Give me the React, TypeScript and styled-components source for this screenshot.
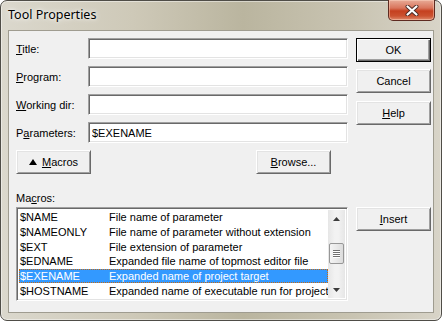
import { Fragment } from "react";
import styled, { createGlobalStyle } from "styled-components";

const GlobalStyle = createGlobalStyle`
  body {
    margin: 0;
    background: #ffffff;
  }
`;

const Window = styled.div`
  box-sizing: border-box;
  width: 442px;
  height: 321px;
  border: 1px solid #4f4d47;
  border-radius: 7px;
  padding: 0 7px 7px 7px;
  display: flex;
  flex-direction: column;
  background: linear-gradient(
    90deg,
    #dbd8cd 0%,
    #cec9b8 30%,
    #bab59f 55%,
    #c9c4b2 80%,
    #d8d4c8 100%
  );
  box-shadow: inset 0 0 0 1px rgba(255, 255, 255, 0.45);
`;

const TitleBar = styled.div`
  height: 29px;
  display: flex;
  align-items: flex-start;
  justify-content: space-between;
  margin-right: -1px;
`;

const Title = styled.div`
  font-family: "Noto Sans", "Open Sans", sans-serif;
  font-size: 12.5px;
  color: #000;
  line-height: 16px;
  padding-top: 6px;
  text-shadow: 0 0 6px rgba(255, 255, 255, 0.9), 0 0 3px rgba(255, 255, 255, 0.9);
`;

const CloseButton = styled.div`
  box-sizing: border-box;
  width: 47px;
  height: 21px;
  margin-top: -1px;
  border: 1px solid #5e2a20;
  border-top: none;
  border-radius: 0 0 5px 5px;
  display: flex;
  align-items: center;
  justify-content: center;
  background: linear-gradient(180deg, #e8ab97 0%, #d9755c 40%, #c5401f 55%, #cb5230 80%, #df8a6c 100%);
  box-shadow: inset 0 0 0 1px rgba(255, 220, 200, 0.45);
`;

const Client = styled.div`
  box-sizing: border-box;
  height: 283px;
  border: 1px solid #9f9c90;
  background: #f0f0f0;
  padding: 7px 0 0 7px;
  display: grid;
  grid-template-columns: 332px 75px;
  column-gap: 8px;
  align-items: start;
  font-family: "Liberation Sans", Arial, sans-serif;
  font-size: 11px;
  color: #000;
`;

const LeftCol = styled.div`
  display: flex;
  flex-direction: column;
`;

const RightCol = styled.div`
  display: flex;
  flex-direction: column;
`;

const Fields = styled.div`
  display: grid;
  grid-template-columns: 72px 260px;
  row-gap: 7px;
  align-items: center;
`;

const Label = styled.label`
  line-height: 14px;
`;

const Key = styled.span`
  text-decoration: underline;
  text-underline-offset: 1px;
`;

const TextBox = styled.input`
  box-sizing: border-box;
  width: 260px;
  height: 21px;
  margin: 0;
  padding: 0 3px;
  border: 1px solid;
  border-color: #a0a0a0 #ffffff #ffffff #a0a0a0;
  box-shadow: inset 1px 1px 0 #696969, inset -1px -1px 0 #e3e3e3;
  background: #fff;
  font-family: "Liberation Sans", Arial, sans-serif;
  font-size: 11px;
  color: #000;
  outline: none;
`;

const Button = styled.div<{ $default?: boolean; $gap?: number }>`
  box-sizing: border-box;
  width: 75px;
  height: 24px;
  margin-top: ${(p) => p.$gap ?? 0}px;
  display: flex;
  align-items: center;
  justify-content: center;
  gap: 5px;
  background: #f0f0f0;
  line-height: 14px;
  border: 1px solid;
  border-color: ${(p) =>
    p.$default ? "#000 #000 #000 #000" : "#ffffff #696969 #696969 #ffffff"};
  box-shadow: ${(p) =>
    p.$default
      ? "inset 1px 1px 0 #fff, inset -1px -1px 0 #696969, inset -2px -2px 0 #a0a0a0"
      : "inset 1px 1px 0 #e3e3e3, inset -1px -1px 0 #a0a0a0"};
`;

const Triangle = styled.span`
  width: 0;
  height: 0;
  border-left: 4px solid transparent;
  border-right: 4px solid transparent;
  border-bottom: 6px solid #000;
  margin-top: -1px;
`;

const ButtonRow = styled.div`
  margin-top: 7px;
  display: flex;
  justify-content: space-between;
  padding-right: 17px;
`;

const ListLabel = styled.div`
  margin-top: 17px;
  line-height: 14px;
`;

const ListBox = styled.div`
  box-sizing: border-box;
  margin-top: 2px;
  width: 332px;
  height: 94px;
  border: 1px solid;
  border-color: #a0a0a0 #ffffff #ffffff #a0a0a0;
  box-shadow: inset 1px 1px 0 #696969, inset -1px -1px 0 #e3e3e3;
  background: #fff;
  padding: 2px;
  display: flex;
`;

const Rows = styled.div`
  flex: 1;
  display: flex;
  flex-direction: column;
  overflow: hidden;
`;

const Row = styled.div<{ $selected?: boolean }>`
  box-sizing: border-box;
  height: 15px;
  display: grid;
  grid-template-columns: 89px 1fr;
  align-items: center;
  padding-left: 1px;
  white-space: nowrap;
  background: ${(p) => (p.$selected ? "#3399ff" : "transparent")};
  color: ${(p) => (p.$selected ? "#fff" : "#000")};
  outline: ${(p) => (p.$selected ? "1px dotted #c86a10" : "none")};
  outline-offset: -1px;
`;

const ScrollBar = styled.div`
  width: 17px;
  display: flex;
  flex-direction: column;
  background: linear-gradient(90deg, #e6e6e6, #f2f2f2 40%, #f2f2f2 60%, #e6e6e6);
`;

const ArrowBtn = styled.div`
  height: 17px;
  display: flex;
  align-items: center;
  justify-content: center;
`;

const Track = styled.div`
  flex: 1;
  position: relative;
`;

const Thumb = styled.div`
  position: absolute;
  left: 1px;
  right: 1px;
  height: 21px;
  box-sizing: border-box;
  border: 1px solid #979797;
  border-radius: 2px;
  background: linear-gradient(90deg, #f4f4f4, #e9e9e9 50%, #dcdcdc);
  display: flex;
  flex-direction: column;
  align-items: center;
  justify-content: center;
  gap: 1px;
`;

const Grip = styled.span`
  width: 7px;
  height: 1px;
  background: #6f6f6f;
  box-shadow: 0 1px 0 #fff;
`;

const macros = [
  ["$NAME", "File name of parameter"],
  ["$NAMEONLY", "File name of parameter without extension"],
  ["$EXT", "File extension of parameter"],
  ["$EDNAME", "Expanded file name of topmost editor file"],
  ["$EXENAME", "Expanded name of project target"],
  ["$HOSTNAME", "Expanded name of executable run for project"],
];

const fields: { key: string; rest: string; pre?: string; value: string }[] = [
  { key: "T", rest: "itle:", value: "" },
  { key: "P", rest: "rogram:", value: "" },
  { key: "W", rest: "orking dir:", value: "" },
  { pre: "P", key: "a", rest: "rameters:", value: "$EXENAME" },
];

function CloseGlyph() {
  return (
    <svg width="14" height="11" viewBox="0 0 14 11">
      <path d="M2.5 1.5 L11.5 9.5 M11.5 1.5 L2.5 9.5" stroke="#4a2a24" strokeWidth="4" strokeLinecap="round" />
      <path d="M2.5 1.5 L11.5 9.5 M11.5 1.5 L2.5 9.5" stroke="#ffffff" strokeWidth="2.2" strokeLinecap="round" />
    </svg>
  );
}

function Arrow({ up }: { up?: boolean }) {
  return (
    <svg width="7" height="4" viewBox="0 0 7 4">
      <path d={up ? "M0 4 L3.5 0 L7 4 Z" : "M0 0 L7 0 L3.5 4 Z"} fill="#3c3c3c" />
    </svg>
  );
}

export default function App() {
  const thumbTop = 16;
  return (
    <>
      <GlobalStyle />
      <Window>
        <TitleBar>
          <Title>Tool Properties</Title>
          <CloseButton>
            <CloseGlyph />
          </CloseButton>
        </TitleBar>
        <Client>
          <LeftCol>
            <Fields>
              {fields.map((f) => (
                <Fragment key={f.rest}>
                  <Label>
                    {f.pre}
                    <Key>{f.key}</Key>
                    {f.rest}
                  </Label>
                  <TextBox defaultValue={f.value} />
                </Fragment>
              ))}
            </Fields>
            <ButtonRow>
              <Button>
                <Triangle />
                <span>
                  <Key>M</Key>acros
                </span>
              </Button>
              <Button>
                <span>
                  <Key>B</Key>rowse...
                </span>
              </Button>
            </ButtonRow>
            <ListLabel>
              Ma<Key>c</Key>ros:
            </ListLabel>
            <ListBox>
              <Rows>
                {macros.map(([name, desc]) => (
                  <Row key={name} $selected={name === "$EXENAME"}>
                    <span>{name}</span>
                    <span>{desc}</span>
                  </Row>
                ))}
              </Rows>
              <ScrollBar>
                <ArrowBtn>
                  <Arrow up />
                </ArrowBtn>
                <Track>
                  <Thumb style={{ top: thumbTop }}>
                    <Grip />
                    <Grip />
                    <Grip />
                    <Grip />
                  </Thumb>
                </Track>
                <ArrowBtn>
                  <Arrow />
                </ArrowBtn>
              </ScrollBar>
            </ListBox>
          </LeftCol>
          <RightCol>
            <Button $default>OK</Button>
            <Button $gap={7}>Cancel</Button>
            <Button $gap={8}>
              <span>
                <Key>H</Key>elp
              </span>
            </Button>
            <Button $gap={82}>
              <span>
                <Key>I</Key>nsert
              </span>
            </Button>
          </RightCol>
        </Client>
      </Window>
    </>
  );
}
